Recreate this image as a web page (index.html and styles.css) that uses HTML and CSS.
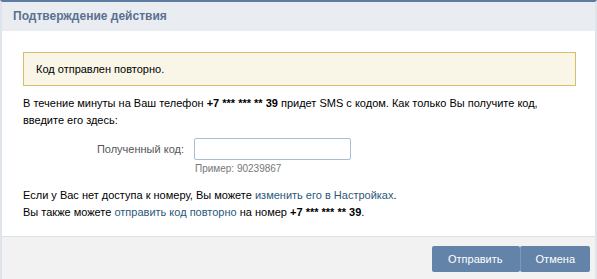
FILE: index.html
```html
<!DOCTYPE html>
<html lang="ru">

<head>
    <meta charset="UTF-8">
    <meta name="viewport" content="width=device-width, initial-scale=1.0">
    <title>Подтверждение действия</title>
    <link rel="stylesheet" href="styles.css">
</head>

<body>
    <div class="box">
        <div class="box-title">Подтверждение действия</div>
        <div class="box-body">
            <div class="msg">Код отправлен повторно.</div>
            <p class="info">
                В течение минуты на Ваш телефон <b>+7 *** *** ** 39</b> придет SMS с кодом. Как только Вы получите код,
                введите его здесь:
            </p>
            <div class="code-row">
                <label class="code-label" for="code">Полученный код:</label>
                <div class="code-field">
                    <input class="code-input" id="code" type="text">
                    <div class="code-hint">Пример: 90239867</div>
                </div>
            </div>
            <p class="info">
                Если у Вас нет доступа к номеру, Вы можете <a href="#">изменить его в Настройках</a>.<br>
                Вы также можете <a href="#">отправить код повторно</a> на номер <b>+7 *** *** ** 39</b>.
            </p>
        </div>
        <div class="box-controls">
            <button class="btn">Отправить</button>
            <button class="btn">Отмена</button>
        </div>
    </div>
</body>

</html>
```

FILE: styles.css
```css
body {
    margin: 0;
    font-family: "Liberation Sans", Arial, sans-serif;
    font-size: 11px;
    color: #000;
}
.box {
    width: 597px;
    height: 279px;
    box-sizing: border-box;
    border-top: 2px solid #5b7ba1;
    border-left: 2px solid #dfe4ea;
    border-right: 2px solid #dfe4ea;
    display: flex;
    flex-direction: column;
}
.box-title {
    background-color: #e9edf1;
    color: #5a7191;
    font-weight: bold;
    font-size: 12px;
    height: 29px;
    line-height: 29px;
    padding-left: 11px;
}
.box-body {
    background-color: #fff;
    padding: 21px 19px 0 21px;
    height: 184px;
    border-bottom: 1px solid #dae1e8;
}
.msg {
    background-color: #f9f6e7;
    border: 1px solid #d4bf6a;
    height: 32px;
    line-height: 32px;
    padding-left: 12px;
}
.info {
    margin: 0;
    line-height: 17px;
}
.msg + .info {
    margin-top: 9px;
}
.info a {
    color: #2b587a;
    text-decoration: none;
}
.code-row {
    display: flex;
    margin: 9px 0 13px;
}
.code-label {
    width: 161px;
    text-align: right;
    color: #555;
    line-height: 22px;
    padding-right: 10px;
}
.code-input {
    width: 157px;
    height: 22px;
    box-sizing: border-box;
    border: 1px solid #a9bdd5;
    border-radius: 2px;
    margin: 0;
    outline: none;
}
.code-hint {
    color: #777;
    font-size: 10px;
    margin-top: 3px;
    padding-left: 1px;
}
.box-controls {
    flex: 1;
    background-color: #f2f2f2;
    display: flex;
    justify-content: flex-end;
    align-items: flex-start;
    padding: 9px 5px 0 0;
}
.btn {
    background-color: #6383a8;
    color: #fff;
    border: none;
    border-radius: 2px;
    font-family: "Liberation Sans", Arial, sans-serif;
    font-size: 11px;
    height: 26px;
    padding: 0 16px;
    cursor: pointer;
}
.btn:first-child {
    padding-right: 17px;
}
.btn + .btn {
    margin-left: 0;
    border-left: 1px solid #7d97b6;
    padding: 0 15px;
}
```
